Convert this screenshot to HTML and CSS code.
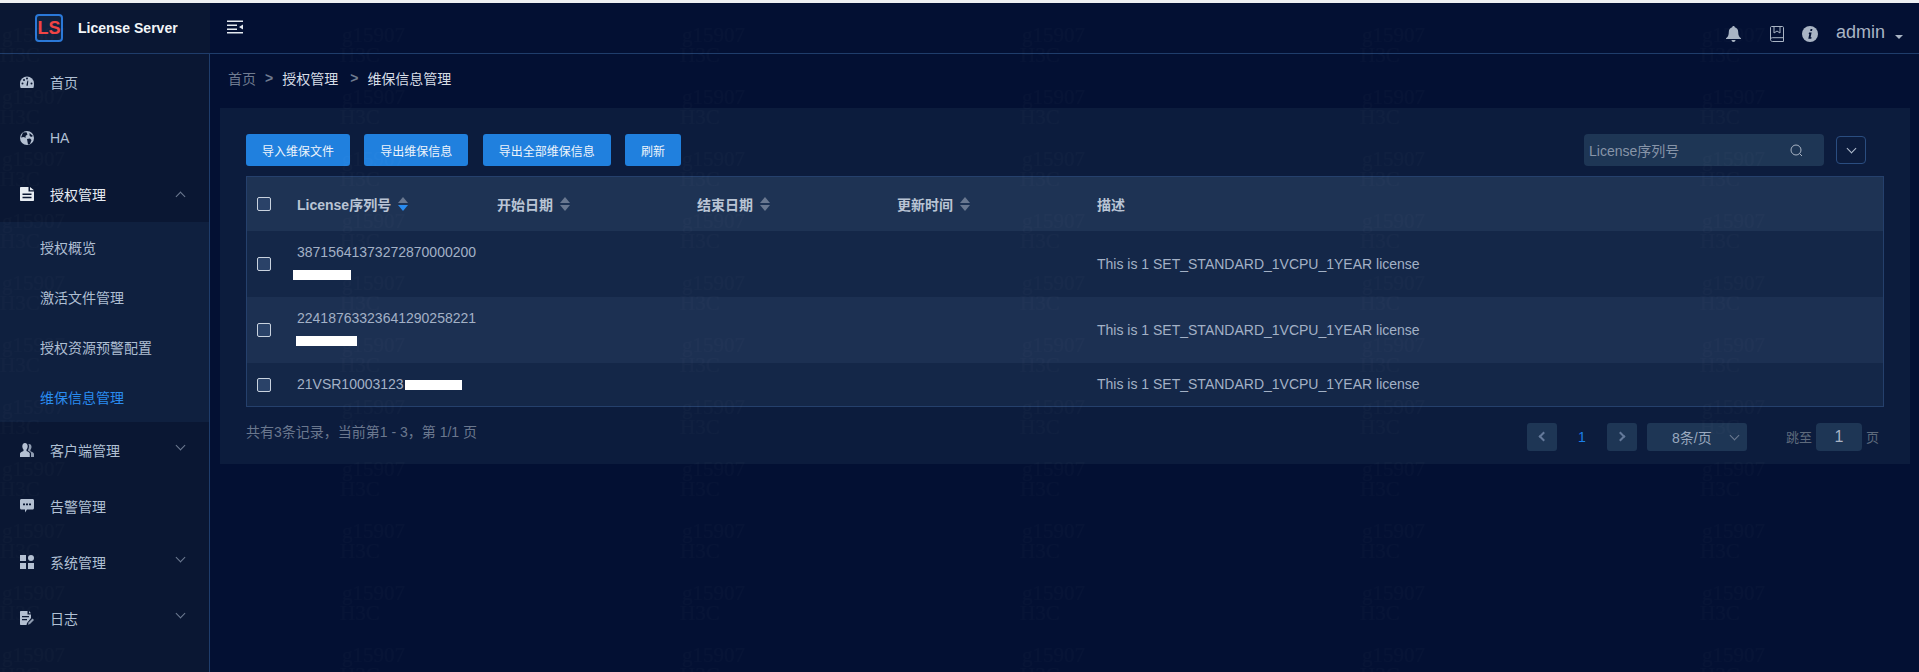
FILE: index.html
```html
<!DOCTYPE html>
<html lang="zh-CN">

<head>
    <meta charset="UTF-8" />
    <meta name="viewport" content="width=device-width, initial-scale=1.0" />
    <title>维保信息管理 - License Server</title>
    <link rel="stylesheet" href="styles.css">
</head>

<body>
    <div class="top-strip"></div>

    <header class="topbar">
        <div class="brand">
            <div class="logo">LS</div>
            <span class="brand-name">License Server</span>
        </div>
        <button class="menu-toggle" type="button" aria-label="menu">
            <svg width="16" height="14" viewBox="0 0 16 14">
                <path d="M0 0.5H16V2H0ZM0 4.5H10V6H0ZM0 8.5H10V10H0ZM0 12H16V13.5H0ZM16 4.5V9.5L12 7Z" fill="#e4e9f0" />
            </svg>
        </button>
        <div class="topbar-right">
            <svg class="top-icon bell" width="15" height="16" viewBox="0 0 15 16">
                <path d="M7.5 0C8.3 0 8.8 .6 8.8 1.3C11 1.9 12.2 3.700 12.200 6C12.200 9.500 13.200 10.800 15 12.300V13H0V12.300C1.800 10.800 2.800 9.500 2.800 6C2.800 3.700 4 1.900 6.200 1.300C6.200 .6 6.700 0 7.500 0ZM5.500 14H9.500C9.500 15.200 8.600 16 7.500 16C6.400 16 5.500 15.200 5.500 14Z" fill="#a9b4c4" />
            </svg>
            <svg class="top-icon book" width="14" height="16" viewBox="0 0 14 16">
                <path d="M1.500 .5H12.500C13 .5 13.500 1 13.500 1.500V15.500H2.500C1.400 15.500 .5 14.700 .5 13.500V1.500C.5 1 1 .5 1.500 .5ZM.5 13.500C.5 12.400 1.400 11.700 2.500 11.700H13.500" fill="none" stroke="#a9b4c4" />
                <path d="M4 .5H10V7L7 5L4 7Z" fill="none" stroke="#a9b4c4" />
            </svg>
            <svg class="top-icon info" width="16" height="16" viewBox="0 0 16 16">
                <circle cx="8" cy="8" r="8" fill="#a9b4c4" />
                <path d="M8.600 3H10.400L10 5H8.200ZM7 6.500H9.600L8.600 11.300H9.600L9.300 12.800H6.300L7.300 8H6.700Z" fill="#031033" />
            </svg>
            <span class="user-name">admin</span>
            <span class="user-caret"></span>
        </div>
    </header>

    <div class="layout">
        <aside class="sidebar">
            <ul class="menu">
                <li class="menu-item">
                    <svg class="menu-icon" width="14" height="14" viewBox="0 0 14 14">
                        <path d="M0 8.500A7 7 0 0 1 14 8.500C14 10.600 13.800 12 13.300 13H.7C.2 12 0 10.600 0 8.500Z" fill="#b4c0d2" />
                        <path d="M6.300 10.500L7.500 5.500L8.300 5.700L7.800 10.700Z" fill="#0a1733" />
                        <circle cx="2.500" cy="8.500" r="1" fill="#0a1733" />
                        <circle cx="4" cy="5" r="1" fill="#0a1733" />
                        <circle cx="7" cy="3.600" r="1" fill="#0a1733" />
                        <circle cx="11.500" cy="8.500" r="1" fill="#0a1733" />
                    </svg>
                    <span>首页</span>
                </li>
                <li class="menu-item">
                    <svg class="menu-icon" width="14" height="14" viewBox="0 0 14 14">
                        <circle cx="7" cy="7" r="7" fill="#b4c0d2" />
                        <path d="M3 1.500L6.500 1.300L7.500 3.500L5.500 5L5.800 6.800L3.500 6L1 6.500ZM7 8L10 7.500L11.500 9L10 13L8 13.500ZM9.500 2L13 5L11 6L9.500 4.500Z" fill="#0a1733" />
                    </svg>
                    <span>HA</span>
                </li>
                <li class="menu-item is-open">
                    <svg class="menu-icon" width="14" height="14" viewBox="0 0 14 14">
                        <path d="M1 0H8.500V4.500H14V13C14 13.600 13.600 14 13 14H1C.4 14 0 13.600 0 13V1C0 .4 .4 0 1 0ZM10 0L14 3.200H10Z" fill="#e8edf3" />
                        <path d="M2.500 6.500H11.500V8H2.500ZM2.500 9.800H11.500V11.300H2.500Z" fill="#0a1733" />
                    </svg>
                    <span>授权管理</span>
                    <i class="chev chev-up"></i>
                </li>
                <li>
                    <ul class="submenu">
                        <li>授权概览</li>
                        <li>激活文件管理</li>
                        <li>授权资源预警配置</li>
                        <li class="is-active">维保信息管理</li>
                    </ul>
                </li>
                <li class="menu-item">
                    <svg class="menu-icon" width="14" height="14" viewBox="0 0 14 14">
                        <path d="M5 0C6.700 0 7.700 1.300 7.700 3.200C7.700 4.500 7.200 5.700 6.500 6.500V8C8 8.700 9.500 9.300 9.800 10.500V14H0V10.500C.3 9.300 2 8.700 3.500 8V6.500C2.800 5.700 2.300 4.500 2.300 3.200C2.300 1.300 3.300 0 5 0Z" fill="#b4c0d2" />
                        <path d="M9 1C10.700 1 11.500 2.300 11.500 3.800C11.500 5 11 6.200 10.400 7V8.200C12 8.900 13.700 9.500 14 10.700V14H11V10.200C10.500 9 9.200 8.300 8 7.800V7C8.700 6 9 4.700 9 3.200C9 2.400 8.800 1.600 8.400 1.100Z" fill="#8e9bb0" />
                    </svg>
                    <span>客户端管理</span>
                    <i class="chev"></i>
                </li>
                <li class="menu-item">
                    <svg class="menu-icon" width="14" height="14" viewBox="0 0 14 14">
                        <path d="M1.500 0H12.500C13.400 0 14 .6 14 1.500V9C14 9.900 13.400 10.500 12.500 10.500H7L5 13.500V10.500H1.500C.6 10.500 0 9.900 0 9V1.500C0 .6 .6 0 1.500 0Z" fill="#b4c0d2" />
                        <path d="M3 4.500H5V6.300H3ZM6 4.500H8V6.300H6ZM9 4.500H11V6.300H9Z" fill="#0a1733" />
                    </svg>
                    <span>告警管理</span>
                </li>
                <li class="menu-item">
                    <svg class="menu-icon" width="14" height="14" viewBox="0 0 14 14">
                        <path d="M0 0H6V6H0ZM0 8H6V14H0ZM8 8H14V14H8Z" fill="#b4c0d2" />
                        <circle cx="11" cy="3" r="3" fill="#b4c0d2" />
                    </svg>
                    <span>系统管理</span>
                    <i class="chev"></i>
                </li>
                <li class="menu-item">
                    <svg class="menu-icon" width="14" height="14" viewBox="0 0 14 14">
                        <path d="M1 0H7.500V3.500H11V7L7 12L6.500 14H1C.4 14 0 13.600 0 13V1C0 .4 .4 0 1 0ZM9 0L11 2.300H9Z" fill="#b4c0d2" />
                        <path d="M2 5H9V6.300H2ZM2 8H7V9.300H2Z" fill="#0a1733" />
                        <path d="M8 13.800L8.500 11.500L12.500 7.500L14 9L10 13Z" fill="#8e9bb0" />
                    </svg>
                    <span>日志</span>
                    <i class="chev"></i>
                </li>
            </ul>
        </aside>

        <main class="main">
            <div class="breadcrumb">
                <span class="crumb-root">首页</span>
                <span class="crumb-sep">&gt;</span>
                <span class="crumb crumb-mid">授权管理</span>
                <span class="crumb-sep">&gt;</span>
                <span class="crumb">维保信息管理</span>
            </div>

            <section class="panel">
                <div class="toolbar">
                    <div class="toolbar-left">
                        <button class="btn" type="button">导入维保文件</button>
                        <button class="btn" type="button">导出维保信息</button>
                        <button class="btn" type="button">导出全部维保信息</button>
                        <button class="btn" type="button">刷新</button>
                    </div>
                    <div class="toolbar-right">
                        <div class="search">
                            <span class="search-hint">License序列号</span>
                            <svg width="13" height="13" viewBox="0 0 13 13">
                                <circle cx="6" cy="6" r="5" fill="none" stroke="#a9b4c4" />
                                <path d="M9.500 9.500L12 12" stroke="#a9b4c4" />
                            </svg>
                        </div>
                        <button class="expand-btn" type="button" aria-label="expand"><i class="chev"></i></button>
                    </div>
                </div>

                <div class="table-wrap">
                    <table class="license-table">
                        <thead>
                            <tr>
                                <th class="col-check"><span class="checkbox"></span></th>
                                <th class="col-date">License序列号 <span class="sort is-down"></span></th>
                                <th class="col-date">开始日期 <span class="sort"></span></th>
                                <th class="col-date">结束日期 <span class="sort"></span></th>
                                <th class="col-date">更新时间 <span class="sort"></span></th>
                                <th>描述</th>
                            </tr>
                        </thead>
                        <tbody>
                            <tr>
                                <td><span class="checkbox"></span></td>
                                <td>38715641373272870000200<span class="redact redact-a"></span></td>
                                <td></td>
                                <td></td>
                                <td></td>
                                <td>This is 1 SET_STANDARD_1VCPU_1YEAR license</td>
                            </tr>
                            <tr>
                                <td><span class="checkbox"></span></td>
                                <td>22418763323641290258221<span class="redact redact-b"></span></td>
                                <td></td>
                                <td></td>
                                <td></td>
                                <td>This is 1 SET_STANDARD_1VCPU_1YEAR license</td>
                            </tr>
                            <tr>
                                <td><span class="checkbox"></span></td>
                                <td>21VSR10003123<span class="redact redact-c"></span></td>
                                <td></td>
                                <td></td>
                                <td></td>
                                <td>This is 1 SET_STANDARD_1VCPU_1YEAR license</td>
                            </tr>
                        </tbody>
                    </table>
                </div>

                <div class="table-footer">
                    <div class="record-count">共有3条记录，当前第1 - 3，第 1/1 页</div>
                    <div class="pager">
                        <button class="page-arrow" type="button" aria-label="prev"><i class="arrow arrow-left"></i></button>
                        <span class="page-num">1</span>
                        <button class="page-arrow" type="button" aria-label="next"><i class="arrow arrow-right"></i></button>
                        <div class="page-size"><span>8条/页</span><i class="chev"></i></div>
                        <span class="jump-label">跳至</span>
                        <div class="jump-input">1</div>
                        <span class="jump-label">页</span>
                    </div>
                </div>
            </section>
        </main>
    </div>

    <!-- watermark -->
    <svg class="watermark" width="1919" height="672">
        <defs>
            <pattern id="wm" x="0" y="8" width="340" height="62" patternUnits="userSpaceOnUse">
                <text x="2" y="34">g15907</text>
                <text x="0" y="54">H3C</text>
            </pattern>
        </defs>
        <rect width="1919" height="672" fill="url(#wm)" />
    </svg>
</body>

</html>
```

FILE: styles.css
```css
* {
    box-sizing: border-box;
}

html,
body {
    height: 100%;
}

body {
    margin: 0;
    display: flex;
    flex-direction: column;
    overflow: hidden;
    position: relative;
    background-color: #031033;
    color: #a9b4c4;
    font-family: "Liberation Sans", "Noto Sans CJK SC", sans-serif;
    font-size: 14px;
}

ul {
    list-style: none;
    margin: 0;
    padding: 0;
}

button {
    font-family: inherit;
    border: none;
    padding: 0;
    cursor: pointer;
}

.top-strip {
    height: 3px;
    background-color: #eef0f2;
    flex: none;
}

/* top bar */
.topbar {
    display: flex;
    align-items: center;
    height: 51px;
    flex: none;
    border-bottom: 1px solid #1f3d6b;
}

.brand {
    display: flex;
    align-items: center;
    width: 210px;
    height: 100%;
    padding-left: 35px;
    background-color: #0a1733;
}

.logo {
    width: 28px;
    height: 28px;
    border: 2px solid #2a78d8;
    border-radius: 4px;
    background-color: #10223f;
    color: #f04444;
    font-size: 18px;
    font-weight: bold;
    line-height: 24px;
    text-align: center;
}

.brand-name {
    margin-left: 15px;
    color: #f2f5f8;
    font-weight: bold;
}

.menu-toggle {
    display: flex;
    margin-left: 17px;
    margin-top: -2px;
    background: none;
}

.topbar-right {
    display: flex;
    align-items: center;
    margin-left: auto;
    padding-right: 16px;
}

.top-icon {
    margin-top: 12px;
    flex: none;
}

.book {
    margin-left: 29px;
}

.info {
    margin-left: 18px;
}

.user-name {
    margin-left: 18px;
    margin-top: 9px;
    font-size: 18px;
}

.user-caret {
    margin-left: 10px;
    margin-top: 18px;
    border-left: 4px solid transparent;
    border-right: 4px solid transparent;
    border-top: 4px solid #a9b4c4;
}

.layout {
    display: flex;
    flex: 1;
    min-height: 0;
}

/* sidebar */
.sidebar {
    width: 210px;
    flex: none;
    background-color: #0a1733;
    border-right: 1px solid #1f3d6b;
}

.menu-item {
    display: flex;
    align-items: center;
    height: 56px;
    padding: 0 25px 0 20px;
    color: #b0c0d4;
}

.menu-item > span {
    margin-left: 16px;
}

.menu-icon {
    flex: none;
}

.menu-item.is-open {
    color: #e6ebf2;
}

.chev {
    display: block;
    width: 7px;
    height: 7px;
    border-right: 1px solid #6d7b92;
    border-bottom: 1px solid #6d7b92;
    transform: rotate(45deg);
}

.menu-item .chev {
    margin-left: auto;
    margin-top: -9px;
}

.menu-item .chev-up {
    margin-top: 5px;
    transform: rotate(225deg);
}

.submenu {
    background-color: #0f203f;
}

.submenu li {
    height: 50px;
    padding-left: 40px;
    line-height: 52px;
    color: #aebed2;
}

.submenu li.is-active {
    color: #2a8cf0;
}

/* content */
.main {
    flex: 1;
    min-width: 0;
    padding: 0 9px 0 10px;
}

.breadcrumb {
    display: flex;
    align-items: center;
    height: 48px;
    margin-bottom: 6px;
    padding-left: 8px;
    color: #d7dde6;
}

.crumb-root {
    color: #6f7b90;
}

.crumb-sep {
    margin: 0 9px;
    color: #6f7b90;
    font-weight: bold;
}

.crumb-mid {
    margin-right: 3px;
}

.panel {
    padding: 26px 26px 14px;
    background-color: #0c1c3d;
}

.toolbar {
    display: flex;
    justify-content: space-between;
    align-items: center;
    height: 32px;
    margin-bottom: 10px;
}

.toolbar-left {
    display: flex;
    gap: 14.3px;
}

.btn {
    height: 32px;
    padding: 0 16px;
    border-radius: 3px;
    background-color: #2080de;
    color: #eef4fb;
    font-size: 12px;
}

.toolbar-right {
    display: flex;
    align-items: center;
    gap: 12px;
    padding-right: 18px;
}

.search {
    display: flex;
    align-items: center;
    justify-content: space-between;
    width: 240px;
    height: 32px;
    padding: 0 21px 0 5px;
    border-radius: 4px;
    background-color: #1e3655;
}

.search-hint {
    color: #8794a8;
}

.expand-btn {
    display: flex;
    align-items: center;
    justify-content: center;
    width: 30px;
    height: 28px;
    border: 1px solid #2a4d80;
    border-radius: 4px;
    background: none;
}

.expand-btn .chev {
    margin-top: -4px;
    border-color: #b4c0d2;
}

/* table */
.table-wrap {
    border: 1px solid #25406c;
}

.license-table {
    width: 100%;
    border-collapse: collapse;
    table-layout: fixed;
}

.license-table th {
    height: 54px;
    padding: 0 10px;
    background-color: #1e3354;
    color: #b9c4d4;
    font-weight: bold;
    text-align: left;
}

.license-table .col-check {
    width: 40px;
}

.license-table .col-date {
    width: 200px;
}

.license-table td {
    padding: 10px;
    line-height: 23px;
    color: #a3b1c6;
    vertical-align: middle;
    background-color: #142748;
}

.license-table tbody tr:nth-child(2) td {
    background-color: #1c3052;
}

.checkbox {
    display: block;
    width: 14px;
    height: 14px;
    border: 1px solid #c9d2de;
    border-radius: 2px;
    background-color: #2a4268;
}

.sort {
    display: inline-block;
    margin-left: 3px;
    vertical-align: -1px;
}

.sort::before,
.sort::after {
    content: '';
    display: block;
    border-left: 5px solid transparent;
    border-right: 5px solid transparent;
}

.sort::before {
    margin-bottom: 2px;
    border-bottom: 6px solid #6a7890;
}

.sort::after {
    border-top: 6px solid #6a7890;
}

.sort.is-down::after {
    border-top-color: #2a8cf0;
}

.redact {
    background-color: #fff;
    height: 10px;
}

.redact-a,
.redact-b {
    display: block;
    margin-top: 6px;
    margin-bottom: 7px;
}

.redact-a {
    width: 58px;
    margin-left: -4px;
}

.redact-b {
    width: 61px;
    margin-left: -1px;
}

.redact-c {
    display: inline-block;
    width: 57px;
    margin-left: 1px;
    vertical-align: -1px;
}

/* footer + pagination */
.table-footer {
    display: flex;
    justify-content: space-between;
    align-items: flex-start;
    margin-top: 15px;
    height: 28px;
}

.record-count {
    line-height: 20px;
    color: #6a778e;
}

.pager {
    display: flex;
    align-items: center;
    padding-right: 5px;
}

.page-arrow {
    display: flex;
    align-items: center;
    justify-content: center;
    width: 30px;
    height: 28px;
    border-radius: 3px;
    background-color: #1e3655;
}

.arrow {
    display: block;
    width: 7px;
    height: 7px;
    border-left: 2px solid #64799a;
    border-bottom: 2px solid #64799a;
}

.arrow-left {
    margin-left: 3px;
    transform: rotate(45deg);
}

.arrow-right {
    margin-right: 3px;
    transform: rotate(225deg);
}

.page-num {
    width: 50px;
    color: #1b7fe8;
    text-align: center;
}

.page-size {
    display: flex;
    align-items: center;
    width: 100px;
    height: 28px;
    margin-left: 10px;
    padding: 0 9px 0 25px;
    border-radius: 3px;
    background-color: #1e3655;
    color: #9aa9bf;
}

.page-size .chev {
    margin-left: auto;
    margin-top: -3px;
}

.jump-label {
    font-size: 13px;
    color: #5e6a7c;
}

.page-size + .jump-label {
    margin-left: 39px;
}

.jump-input {
    width: 46px;
    height: 28px;
    margin: 1px 4px 0;
    border-radius: 4px;
    background-color: #1e3655;
    font-size: 16px;
    line-height: 28px;
    text-align: center;
}

/* watermark sits over everything */
.watermark {
    position: absolute;
    top: 0;
    left: 0;
    pointer-events: none;
}

.watermark text {
    font-family: "Liberation Serif", serif;
    font-size: 21px;
    fill: rgba(255, 255, 255, 0.014);
}
```
